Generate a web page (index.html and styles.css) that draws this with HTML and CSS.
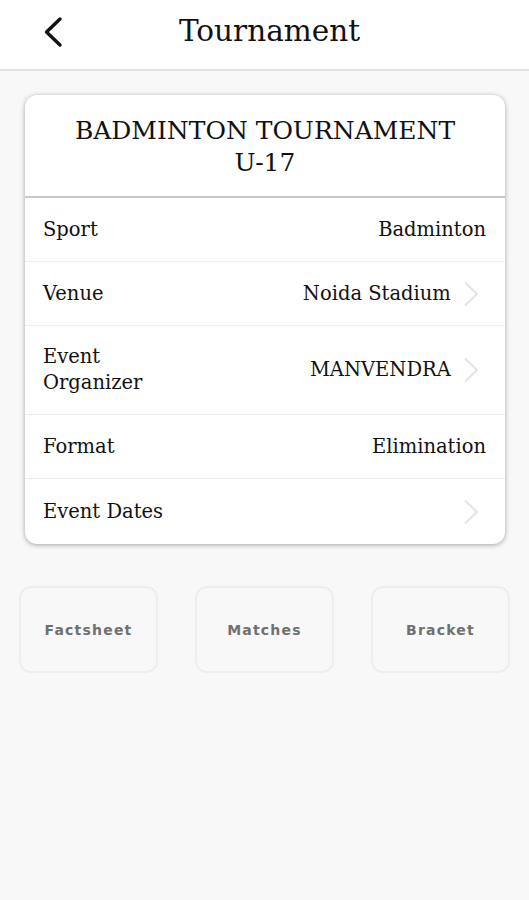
FILE: index.html
```html
<!DOCTYPE html>
<html lang="en">
<head>
  <meta charset="UTF-8">
  <title>Tournament</title>
  <link rel="stylesheet" href="styles.css">
</head>
<body>

<header class="topbar">
  <button class="back" aria-label="Back">
    <svg width="22" height="32" viewBox="0 0 22 32"><path d="M19 3 L5.5 16 L19 29" fill="none" stroke="#111" stroke-width="3.4" stroke-linecap="round" stroke-linejoin="round"/></svg>
  </button>
  <h1>Tournament</h1>
</header>

<main class="content">
  <section class="card">
    <div class="card-title">BADMINTON TOURNAMENT<br>U-17</div>
    <div class="row">
      <span class="label">Sport</span>
      <span class="value">Badminton</span>
    </div>
    <div class="row">
      <span class="label">Venue</span>
      <span class="value">Noida Stadium <svg class="chev" viewBox="0 0 16 26"><path d="M2 1.5 L14 13 L2 24.5" fill="none" stroke="#e4e4e4" stroke-width="2"/></svg></span>
    </div>
    <div class="row tall">
      <span class="label">Event<br>Organizer</span>
      <span class="value">MANVENDRA <svg class="chev" viewBox="0 0 16 26"><path d="M2 1.5 L14 13 L2 24.5" fill="none" stroke="#e4e4e4" stroke-width="2"/></svg></span>
    </div>
    <div class="row">
      <span class="label">Format</span>
      <span class="value">Elimination</span>
    </div>
    <div class="row">
      <span class="label">Event Dates</span>
      <span class="value"><svg class="chev" viewBox="0 0 16 26"><path d="M2 1.5 L14 13 L2 24.5" fill="none" stroke="#e4e4e4" stroke-width="2"/></svg></span>
    </div>
  </section>

  <nav class="tabs">
    <button class="tab">Factsheet</button>
    <button class="tab">Matches</button>
    <button class="tab">Bracket</button>
  </nav>
</main>

</body>
</html>
```

FILE: styles.css
```css
body {
  margin: 0;
  background: #f8f8f8;
  font-family: 'DejaVu Serif', serif;
  color: #111;
  min-height: 100vh;
}

.topbar {
  height: 69px;
  background: #fff;
  border-bottom: 2px solid #e2e2e2;
  display: flex;
  align-items: center;
  justify-content: center;
  position: relative;
}

.back {
  position: absolute;
  left: 41px;
  top: 16px;
  background: none;
  border: none;
  padding: 0;
  height: 32px;
}

.topbar h1 {
  margin: 0 0 0 10px;
  font-weight: normal;
  font-size: 29.5px;
  padding-bottom: 7px;
}

.content {
  padding: 24px 24px 0 25px;
}

.card {
  background: #fff;
  border-radius: 12px;
  box-shadow: 0 1px 5px rgba(0, 0, 0, 0.35);
  overflow: hidden;
}

.card-title {
  height: 103px;
  box-sizing: border-box;
  padding-top: 20px;
  text-align: center;
  font-size: 25px;
  line-height: 32px;
  border-bottom: 2px solid #c8c8c8;
}

.row {
  height: 64px;
  box-sizing: border-box;
  display: flex;
  align-items: center;
  justify-content: space-between;
  padding: 0 19px 0 18px;
  border-bottom: 1px solid #eee;
  font-size: 19.5px;
}

.row:last-child { border-bottom: none; height: 65px; }

.row.tall { height: 89px; line-height: 26px; }

.value {
  display: flex;
  align-items: center;
  white-space: pre;
}

.chev {
  width: 16px;
  height: 26px;
  margin: 0 7px 0 6px;
}

.tabs {
  display: flex;
  justify-content: space-between;
  margin: 42px -5px 0 -6px;
}

.tab {
  width: 139px;
  height: 87px;
  background: #f8f8f8;
  border: 2px solid #eee;
  border-radius: 12px;
  font-family: 'DejaVu Sans', sans-serif;
  font-size: 14px;
  font-weight: bold;
  letter-spacing: 1.2px;
  color: #707070;
}
```
